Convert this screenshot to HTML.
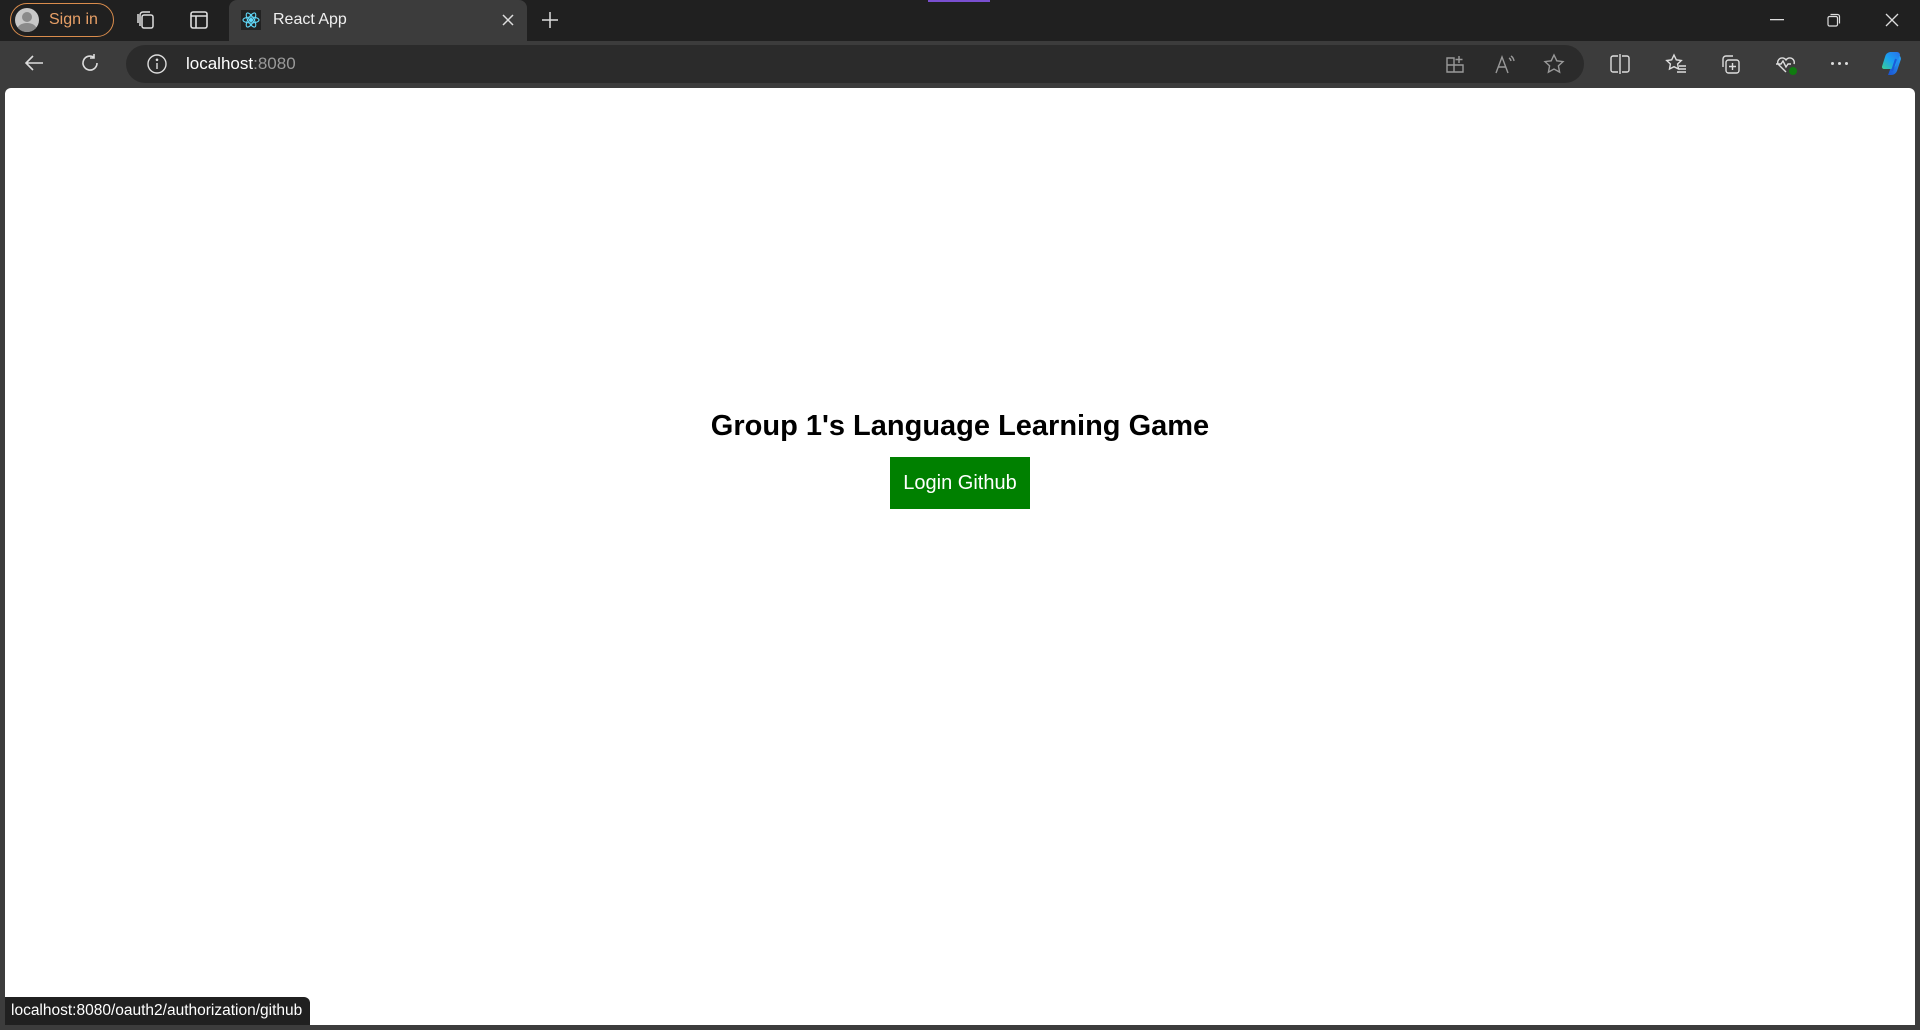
<!DOCTYPE html>
<html><head><meta charset="utf-8"><style>
*{margin:0;padding:0;box-sizing:border-box}
body{width:1920px;height:1030px;background:#3c3c3c;font-family:"Segoe UI","Liberation Sans",sans-serif;position:relative;overflow:hidden}
.tabs{position:absolute;left:0;top:0;width:1920px;height:41px;background:#202020}
.tb{position:absolute;top:41px;left:0;width:1920px;height:47px;background:#3c3c3c}
.page{position:absolute;left:5px;top:88px;width:1910px;height:937px;background:#fff;border-radius:6px 6px 0 0}
.abs{position:absolute}
svg{position:absolute}
</style></head><body>
<div class="tabs">
  <div class="abs" style="left:10px;top:3px;width:104px;height:34px;border:1.5px solid #d98c4c;border-radius:17px"></div>
  <div class="abs" style="left:15px;top:8px;width:24px;height:24px;border-radius:50%;background:#c8c8c8;overflow:hidden">
    <div class="abs" style="left:7px;top:4px;width:10px;height:10px;border-radius:50%;background:#8a8a8a"></div>
    <div class="abs" style="left:2px;top:15px;width:20px;height:14px;border-radius:50%;background:#8a8a8a"></div>
  </div>
  <div class="abs" style="left:49px;top:11px;color:#e8a067;font-size:16px">Sign in</div>
  <svg style="left:135px;top:9px" width="22" height="22" viewBox="0 0 22 22" fill="none" stroke="#ddd" stroke-width="1.5"><rect x="7" y="6" width="11" height="13" rx="2"/><path d="M5 17V6a3 3 0 0 1 3-3h7M3 14V5"/></svg>
  <svg style="left:189px;top:10px" width="20" height="20" viewBox="0 0 20 20" fill="none" stroke="#ddd" stroke-width="1.6"><rect x="2" y="2" width="16" height="16" rx="2"/><path d="M2 6h16M7 6v12"/></svg>
  <div class="abs" style="left:229px;top:0;width:298px;height:41px;background:#3c3c3c;border-radius:8px 8px 0 0"></div>
  <svg style="left:241px;top:10px" width="20" height="20" viewBox="0 0 20 20" fill="none" stroke="#61dafb" stroke-width="1.1"><rect x="0" y="0" width="20" height="20" fill="#222" stroke="none"/><ellipse cx="10" cy="10" rx="8" ry="3"/><ellipse cx="10" cy="10" rx="8" ry="3" transform="rotate(60 10 10)"/><ellipse cx="10" cy="10" rx="8" ry="3" transform="rotate(120 10 10)"/><circle cx="10" cy="10" r="1.5" fill="#61dafb"/></svg>
  <div class="abs" style="left:273px;top:11px;color:#f0f0f0;font-size:16px">React App</div>
  <svg style="left:502px;top:14px" width="12" height="12" viewBox="0 0 12 12" stroke="#ddd" stroke-width="1.5"><path d="M1 1l10 10M11 1L1 11"/></svg>
  <svg style="left:541px;top:11px" width="18" height="18" viewBox="0 0 18 18" stroke="#ddd" stroke-width="1.5"><path d="M9 1v16M1 9h16"/></svg>
  <div class="abs" style="left:928px;top:0;width:62px;height:2px;background:#7a4fd0"></div>
  <svg style="left:1770px;top:19px" width="14" height="2"><rect width="14" height="1.3" fill="#ddd"/></svg>
  <svg style="left:1827px;top:13px" width="14" height="14" viewBox="0 0 14 14" fill="none" stroke="#ddd" stroke-width="1.2"><rect x="1" y="3.5" width="9.5" height="9.5" rx="1.5"/><path d="M3.5 1.5h7a2 2 0 0 1 2 2v7"/></svg>
  <svg style="left:1885px;top:13px" width="14" height="14" viewBox="0 0 14 14" stroke="#ddd" stroke-width="1.3"><path d="M1 1l12 12M13 1L1 13"/></svg>
</div>
<div class="tb">
  <svg style="left:23px;top:11px" width="22" height="22" viewBox="0 0 22 22" fill="none" stroke="#ddd" stroke-width="1.6"><path d="M20 11H3M10 4l-7 7 7 7"/></svg>
  <svg style="left:79px;top:11px" width="22" height="22" viewBox="0 0 22 22" fill="none" stroke="#ddd" stroke-width="1.6"><path d="M18 11a7 7 0 1 1-3-5.7M15 2v4h-4"/></svg>
  <div class="abs" style="left:126px;top:4px;width:1458px;height:38px;background:#2b2b2b;border-radius:19px"></div>
  <svg style="left:146px;top:12px" width="22" height="22" viewBox="0 0 22 22" fill="none" stroke="#ddd" stroke-width="1.4"><circle cx="11" cy="11" r="9"/><path d="M11 10v6"/><circle cx="11" cy="6.8" r=".6" fill="#ddd"/></svg>
  <div class="abs" style="left:186px;top:13px;font-size:17px;color:#fff">localhost<span style="color:#9a9a9a">:8080</span></div>
  <svg style="left:1445px;top:13px" width="20" height="20" viewBox="0 0 20 20" fill="none" stroke="#999" stroke-width="1.4"><path d="M2 4h7v14H2zM2 11h16v7H9M14 2v7M10.5 5.5h7"/></svg>
  <svg style="left:1494px;top:12px" width="22" height="22" viewBox="0 0 22 22" fill="none" stroke="#999" stroke-width="1.4"><path d="M2 20L8 4l6 16M4.5 14h7M15 5a4 4 0 0 1 2 3M17 3a7 7 0 0 1 3 5"/></svg>
  <svg style="left:1543px;top:12px" width="22" height="22" viewBox="0 0 22 22" fill="none" stroke="#999" stroke-width="1.4"><path d="M11 2l2.8 5.8 6.2.8-4.6 4.3 1.2 6.2L11 16l-5.6 3.1 1.2-6.2L2 8.6l6.2-.8z"/></svg>
  <svg style="left:1609px;top:12px" width="22" height="22" viewBox="0 0 22 22" fill="none" stroke="#ddd" stroke-width="1.4"><path d="M9 3H4a2 2 0 0 0-2 2v12a2 2 0 0 0 2 2h5M13 3h5a2 2 0 0 1 2 2v12a2 2 0 0 1-2 2h-5M11 1v20"/></svg>
  <svg style="left:1665px;top:12px" width="22" height="22" viewBox="0 0 22 22" fill="none" stroke="#ddd" stroke-width="1.4"><path d="M9 2l2.3 4.8 5 .7-3.7 3.5.9 5L9 13.7 4.5 16l.9-5L1.7 7.5l5-.7zM14 13h7M14 16h7M12 19h9"/></svg>
  <svg style="left:1720px;top:12px" width="22" height="22" viewBox="0 0 22 22" fill="none" stroke="#ddd" stroke-width="1.4"><path d="M3 14V6a3 3 0 0 1 3-3h7"/><rect x="6" y="7" width="13" height="13" rx="2.5"/><path d="M12.5 10v7M9 13.5h7"/></svg>
  <svg style="left:1774px;top:11px" width="26" height="26" viewBox="0 0 26 26" fill="none" stroke="#ddd" stroke-width="1.4"><path d="M12 20L4 12a4.5 4.5 0 0 1 8-4 4.5 4.5 0 0 1 8 4M2 12h5l2-3 3 6 2-3h3"/><circle cx="19" cy="19" r="4" fill="#107c10" stroke="none"/></svg>
  <div class="abs" style="left:1831px;top:21px;width:20px;height:4px;font-size:0">
    <span class="abs" style="left:0;width:3px;height:3px;border-radius:50%;background:#ddd"></span>
    <span class="abs" style="left:7px;width:3px;height:3px;border-radius:50%;background:#ddd"></span>
    <span class="abs" style="left:14px;width:3px;height:3px;border-radius:50%;background:#ddd"></span>
  </div>
  <svg style="left:1879px;top:8px" width="30" height="30" viewBox="0 0 30 30"><defs><linearGradient id="g" x1="0" y1="1" x2="1" y2="0"><stop offset="0" stop-color="#3ccf91"/><stop offset=".5" stop-color="#1aa0f0"/><stop offset="1" stop-color="#2a70e8"/></linearGradient><linearGradient id="h" x1="0" y1="1" x2="1" y2="0"><stop offset="0" stop-color="#1a50d0"/><stop offset="1" stop-color="#2aa8f8"/></linearGradient></defs><path d="M17 5a5 5 0 0 1 5 5l-4 12a6 6 0 0 1-6 4H9z" fill="url(#h)"/><path d="M11 3h7a3 3 0 0 1 3 3l-4 10a6 6 0 0 1-6 4H5a2 2 0 0 1-2-2.5L6 8a6 6 0 0 1 5-5z" fill="url(#g)"/><path d="M17 10l-4 12" stroke="#1a5ad8" stroke-width="2"/></svg>
</div>
<div class="page">
  <div class="abs" style="left:0;top:322px;width:1910px;text-align:center;font-size:29px;font-weight:bold;color:#000">Group 1's Language Learning Game</div>
  <div class="abs" style="left:885px;top:369px;width:140px;height:52px;background:#008000;color:#fff;font-size:20px;text-align:center;line-height:52px">Login Github</div>
  <div class="abs" style="left:0;top:909px;width:305px;height:28px;background:#202020;border-radius:0 6px 0 0;color:#fff;font-size:15.5px;line-height:28px;padding-left:6px">localhost:8080/oauth2/authorization/github</div>
</div>
</body></html>
